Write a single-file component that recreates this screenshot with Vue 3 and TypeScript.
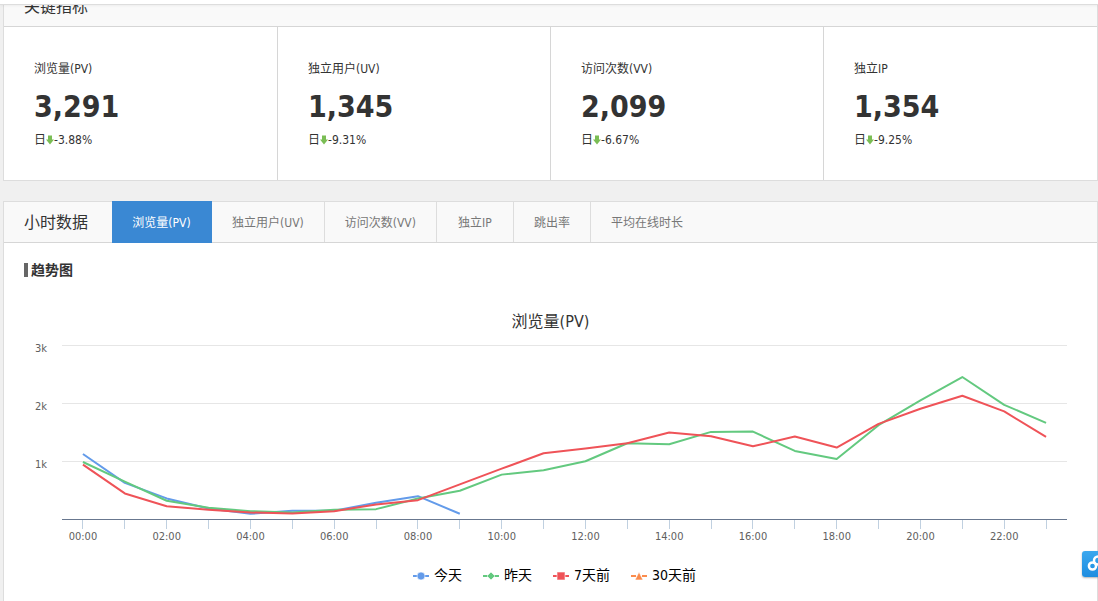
<script setup lang="ts">
import { computed, onBeforeUnmount, onMounted, ref } from 'vue'

interface Metric { label: string; value: string; change: string }
interface Series { name: string; color: string; symbol: 'circle' | 'diamond' | 'square' | 'triangle'; values: number[] }

const metrics: Metric[] = [
  { label: '浏览量(PV)', value: '3,291', change: '-3.88%' },
  { label: '独立用户(UV)', value: '1,345', change: '-9.31%' },
  { label: '访问次数(VV)', value: '2,099', change: '-6.67%' },
  { label: '独立IP', value: '1,354', change: '-9.25%' },
]

const tabs = ['浏览量(PV)', '独立用户(UV)', '访问次数(VV)', '独立IP', '跳出率', '平均在线时长']
const activeTab = ref(0)

const series: Series[] = [
  { name: '今天', color: '#639bea', symbol: 'circle', values: [1121, 623, 355, 182, 90, 142, 142, 280, 394, 90] },
  {
    name: '昨天', color: '#63c97f', symbol: 'diamond',
    values: [983, 644, 315, 194, 135, 112, 159, 170, 355, 488, 765, 839, 995, 1306, 1289, 1502, 1507, 1173, 1035, 1618, 2045, 2448, 1969, 1657],
  },
  {
    name: '7天前', color: '#ef5358', symbol: 'square',
    values: [938, 441, 221, 159, 112, 95, 135, 251, 325, 597, 868, 1133, 1214, 1306, 1491, 1427, 1254, 1422, 1232, 1640, 1900, 2124, 1855, 1415],
  },
  { name: '30天前', color: '#fb8c4d', symbol: 'triangle', values: [] },
]

const chartBox = ref<HTMLElement | null>(null)
const chartWidth = ref(1053)
let observer: ResizeObserver | undefined

onMounted(() => {
  const box = chartBox.value
  if (!box) return
  chartWidth.value = box.clientWidth
  observer = new ResizeObserver(() => { chartWidth.value = box.clientWidth })
  observer.observe(box)
})
onBeforeUnmount(() => observer?.disconnect())

const plotLeft = 38
const plotTop = 8
const plotBottom = 182
const plotRight = computed(() => chartWidth.value - 10)
const step = computed(() => (plotRight.value - plotLeft) / 24)

const xAt = (hour: number) => plotLeft + step.value * (hour + 0.5)
const yAt = (value: number) => plotBottom - (value / 3000) * (plotBottom - plotTop)
const crisp = (n: number) => Math.floor(n) + 0.5

const hours = Array.from({ length: 24 }, (_, h) => h)
const gridValues = [1000, 2000, 3000]
const hourLabel = (h: number) => `${String(h).padStart(2, '0')}:00`
const pointsOf = (s: Series) => s.values.map((v, i) => `${xAt(i)},${yAt(v)}`).join(' ')
</script>

<template>
  <div class="page">
    <div class="topbar"></div>

    <section class="panel">
      <header class="panel-head clipped"><h2 class="panel-title">关键指标</h2></header>
      <div class="metrics">
        <div v-for="m in metrics" :key="m.label" class="metric">
          <div class="metric-label">{{ m.label }}</div>
          <div class="metric-value">{{ m.value }}</div>
          <div class="metric-change">
            <span>日</span>
            <svg class="arrow" width="8" height="10" viewBox="0 0 8 10" aria-hidden="true">
              <path d="M2 0.500h4v4h2L4 9.500 0 4.500h2z" fill="#7abd54" />
            </svg>
            <span>{{ m.change }}</span>
          </div>
        </div>
      </div>
    </section>

    <section class="panel grow">
      <header class="panel-head">
        <h2 class="panel-title">小时数据</h2>
        <nav class="tabs">
          <button
            v-for="(t, i) in tabs"
            :key="t"
            type="button"
            class="tab"
            :class="{ active: i === activeTab }"
            @click="activeTab = i"
          >{{ t }}</button>
        </nav>
      </header>

      <div class="panel-body">
        <h3 class="sub-title">趋势图</h3>
        <div class="chart-title">{{ tabs[activeTab] }}</div>
        <div ref="chartBox" class="chart">
          <svg class="plot" :width="chartWidth" height="210" role="img" aria-label="趋势图">
            <g stroke="#e6e6e6" stroke-width="1">
              <line v-for="g in gridValues" :key="g" :x1="plotLeft" :x2="plotRight" :y1="crisp(yAt(g))" :y2="crisp(yAt(g))" />
            </g>
            <g class="axis-y" text-anchor="end">
              <text v-for="g in gridValues" :key="g" x="23" :y="crisp(yAt(g)) + 6">{{ g / 1000 }}k</text>
            </g>
            <g stroke="#c0d0e0" stroke-width="1">
              <line v-for="h in hours" :key="h" :x1="crisp(xAt(h))" :x2="crisp(xAt(h))" :y1="plotBottom" :y2="plotBottom + 10" />
            </g>
            <line :x1="plotLeft" :x2="plotRight" :y1="crisp(plotBottom)" :y2="crisp(plotBottom)" stroke="#68778f" />
            <g class="axis-x" text-anchor="middle">
              <template v-for="h in hours" :key="h">
                <text v-if="h % 2 === 0" :x="xAt(h)" y="203">{{ hourLabel(h) }}</text>
              </template>
            </g>
            <g fill="none" stroke-width="2" stroke-linejoin="round">
              <polyline v-for="s in series" :key="s.name" :points="pointsOf(s)" :stroke="s.color" />
            </g>
          </svg>
        </div>
        <div class="legend">
          <button v-for="s in series" :key="s.name" type="button" class="legend-item">
            <svg width="16" height="12" viewBox="0 0 16 12" aria-hidden="true">
              <path d="M0 7h5M11 7h5" :stroke="s.color" stroke-width="2" />
              <g :fill="s.color" stroke="#fff" stroke-opacity="0.6" stroke-width="1">
                <circle v-if="s.symbol === 'circle'" cx="8" cy="7" r="4" />
                <path v-else-if="s.symbol === 'diamond'" d="M8 3l4 4-4 4-4-4z" />
                <rect v-else-if="s.symbol === 'square'" x="4" y="3" width="8" height="8" />
                <path v-else d="M8 3l4 8H4z" />
              </g>
            </svg>
            <span>{{ s.name }}</span>
          </button>
        </div>
      </div>
    </section>

    <button type="button" class="share" aria-label="分享">
      <svg width="16" height="26" viewBox="0 0 16 26" fill="none" stroke="#fff" stroke-width="2.500" aria-hidden="true">
        <circle cx="10.500" cy="15" r="3.600" />
        <circle cx="16" cy="9.500" r="4" />
      </svg>
    </button>
  </div>
</template>

<style>
body {
  background: #f0f0f0;
}
</style>

<style scoped>
.page {
  display: flex;
  flex-direction: column;
  min-height: 100vh;
  box-sizing: border-box;
  color: #333;
  font-family: "DejaVu Sans Condensed", "Noto Sans CJK SC", sans-serif;
  font-size: 12px;
  line-height: 20px;
}

button {
  margin: 0;
  border: 0;
  background: none;
  font-family: inherit;
  cursor: pointer;
}

.topbar {
  height: 4px;
  background: #fff;
  border-bottom: 1px solid #ddd;
  box-shadow: 0 1px 3px rgba(0, 0, 0, 0.05);
  position: relative;
}

.panel {
  margin: 0 0 20px 3px;
  border: 1px solid #ddd;
  background: #fff;
}

.panel:first-of-type {
  border-top: 0;
}

.panel.grow {
  flex: 1;
  margin-bottom: 0;
  border-bottom: 0;
}

.panel-head {
  display: flex;
  height: 40px;
  background: #f9f9f9;
  border-bottom: 1px solid #d6d6d6;
}

.panel-head.clipped {
  height: 21px;
  align-items: flex-end;
  overflow: hidden;
}

.panel-title {
  margin: 0;
  padding: 2px 24px 0 20px;
  font-size: 16px;
  font-weight: 400;
  line-height: 38px;
}

.metrics {
  display: grid;
  grid-template-columns: repeat(4, 1fr);
  padding-right: 1px;
}

.metric {
  padding: 32px 30px 30px;
}

.metric + .metric {
  border-left: 1px solid #d6d6d6;
}

.metric-value {
  padding: 11px 0 6px;
  font-size: 30px;
  font-weight: 700;
  line-height: 34px;
}

.metric-change {
  display: flex;
  align-items: center;
}

.tabs {
  display: flex;
}

.tab {
  box-sizing: border-box;
  min-width: 77px;
  padding: 2px 20px 0;
  color: #777;
  font-size: 12px;
  line-height: 38px;
  border-right: 1px solid #ddd;
}

.tab:last-child {
  border-right: 0;
}

.tab.active {
  min-width: 100px;
  margin: -1px 0;
  color: #fff;
  background: #3a88d3;
  border-right: 1px solid #3a88d3;
}

.panel-body {
  padding: 17px 20px 16px;
}

.sub-title {
  display: flex;
  align-items: center;
  gap: 3px;
  margin: 0;
  font-size: 14px;
  line-height: 20px;
}

.sub-title::before {
  content: "";
  width: 4px;
  height: 14px;
  background: #666;
}

.chart-title {
  padding: 29px 0 2px;
  font-size: 16px;
  line-height: 26px;
  text-align: center;
}

.chart {
  overflow: hidden;
}

.plot {
  display: block;
}

.axis-x,
.axis-y {
  fill: #606060;
  font-size: 11px;
}

.legend {
  display: flex;
  justify-content: center;
  gap: 21px;
  padding: 18px 0 0 8px;
}

.legend-item {
  display: flex;
  align-items: center;
  gap: 5px;
  padding: 0;
  color: #000;
  font-size: 14px;
  line-height: 20px;
}

.share {
  position: fixed;
  right: 0;
  bottom: 24px;
  width: 16px;
  height: 26px;
  padding: 0;
  overflow: hidden;
  border-radius: 3px 0 0 3px;
  background: linear-gradient(#3ba7ee, #1e8de0);
  box-shadow: 0 1px 2px rgba(0, 0, 0, 0.3);
}

.share svg {
  display: block;
}
</style>
